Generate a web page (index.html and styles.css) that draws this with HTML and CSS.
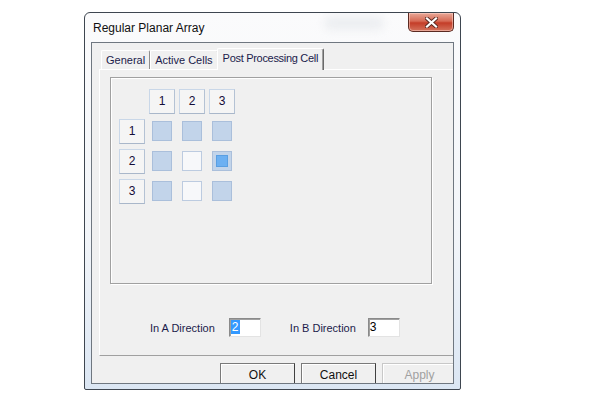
FILE: index.html
```html
<!DOCTYPE html>
<html lang="en">
<head>
    <meta charset="UTF-8">
    <title>Regular Planar Array</title>
    <link rel="stylesheet" href="styles.css">
</head>
<body>
    <div class="window">
        <div class="titlebar">
            <span class="title">Regular Planar Array</span>
            <span class="blur-spot"></span>
            <button class="close-btn" aria-label="Close">
                <svg width="13" height="11" viewBox="0 0 13 11">
                    <path d="M2 1.5 L11 9.5 M11 1.5 L2 9.5" stroke="#5a2a22" stroke-width="4" stroke-linecap="square"/>
                    <path d="M2 1.5 L11 9.5 M11 1.5 L2 9.5" stroke="#ffffff" stroke-width="2.2" stroke-linecap="square"/>
                </svg>
            </button>
        </div>
        <div class="client">
            <div class="tabs">
                <div class="tab">General</div>
                <div class="tab">Active Cells</div>
                <div class="tab tab-active">Post Processing Cell</div>
            </div>
            <div class="panel">
                <div class="groupbox">
                    <div class="cell-grid">
                        <span></span>
                        <div class="hdr">1</div>
                        <div class="hdr">2</div>
                        <div class="hdr">3</div>

                        <div class="hdr">1</div>
                        <div class="cell on"></div>
                        <div class="cell on"></div>
                        <div class="cell on"></div>

                        <div class="hdr">2</div>
                        <div class="cell on"></div>
                        <div class="cell"></div>
                        <div class="cell on picked"><span class="dot"></span></div>

                        <div class="hdr">3</div>
                        <div class="cell on"></div>
                        <div class="cell"></div>
                        <div class="cell on"></div>
                    </div>
                </div>
                <div class="fields">
                    <label class="field">In A Direction <span class="input"><span class="sel">2</span></span></label>
                    <label class="field">In B Direction <span class="input">3</span></label>
                </div>
            </div>
            <div class="buttons">
                <button class="btn">OK</button>
                <button class="btn">Cancel</button>
                <button class="btn btn-disabled">Apply</button>
            </div>
        </div>
    </div>
</body>
</html>
```

FILE: styles.css
```css
body {
    margin: 0;
    background: #ffffff;
    font-family: "Liberation Sans", Arial, sans-serif;
    font-size: 11px;
    color: #1b1b4b;
}
.window {
    margin: 12px 0 0 84px;
    width: 375px;
    height: 376px;
    border: 1px solid #3e4650;
    border-radius: 6px 6px 2px 2px;
    background: linear-gradient(#fbfbfc, #f2f5f9 60%, #dbe6f3);
    display: flex;
    flex-direction: column;
    overflow: hidden;
}
.titlebar {
    height: 29px;
    display: flex;
    align-items: flex-start;
}
.title {
    padding: 8px 0 0 8px;
    font-size: 12px;
    color: #101010;
}
.blur-spot {
    margin: 3px 0 0 120px;
    width: 60px;
    height: 14px;
    border-radius: 8px;
    background: #eceef1;
    filter: blur(4px);
}
.close-btn {
    margin-left: auto;
    margin-right: 6px;
    width: 46px;
    height: 19px;
    padding: 0;
    border: 1px solid #5b2a22;
    border-top: none;
    border-radius: 0 0 5px 5px;
    background: linear-gradient(#e9a898, #d66a55 45%, #c43d28 55%, #d4735d);
    display: flex;
    align-items: center;
    justify-content: center;
    box-shadow: inset 0 0 0 1px rgba(255, 220, 210, 0.5);
}
.client {
    margin: 0 6px;
    height: 340px;
    border: 1px solid #6f7780;
    background: #f0f0f0;
    overflow: hidden;
}
.tabs {
    display: flex;
    align-items: flex-end;
    height: 22px;
    padding: 4px 0 0 9px;
    position: relative;
    z-index: 1;
}
.tab {
    height: 18px;
    line-height: 18px;
    padding: 0 4px;
    border-top: 1px solid #ffffff;
    border-left: 1px solid #ffffff;
    border-right: 1px solid #8e8e8e;
    border-radius: 2px 2px 0 0;
    white-space: nowrap;
}
.tab-active {
    height: 21px;
    line-height: 19px;
    margin: 0 -1px -1px -1px;
    padding: 0 5px;
    letter-spacing: -0.3px;
    background: #f0f0f0;
    border-right-color: #6a6a6a;
    box-shadow: inset -1px 0 0 #a0a0a0;
}
.panel {
    margin-left: 7px;
    width: 358px;
    height: 285px;
    border-top: 1px solid #ffffff;
    border-left: 1px solid #ffffff;
    border-bottom: 1px solid #a0a0a0;
}
.groupbox {
    margin: 7px 0 0 10px;
    width: 304px;
    height: 189px;
    padding: 8px;
    border: 1px solid #a0a0a0;
    box-shadow: 1px 1px 0 #ffffff, inset 1px 1px 0 #ffffff;
}
.cell-grid {
    display: grid;
    grid-template-columns: 28px repeat(3, 30px);
    grid-template-rows: repeat(4, 30px);
    align-items: center;
    justify-items: start;
}
.cell-grid > :nth-child(4n+2),
.cell-grid > :nth-child(4n+3),
.cell-grid > :nth-child(4n+4) {
    justify-self: center;
}
.hdr {
    width: 24px;
    height: 23px;
    line-height: 23px;
    text-align: center;
    font-size: 12px;
    background: #f5f5f5;
    border: 1px solid #c9d7e8;
    border-bottom-color: #a9b7ca;
    border-right-color: #b4c2d4;
    color: #140c38;
}
.cell {
    width: 18px;
    height: 18px;
    background: #f7f8fa;
    border: 1px solid #bccbe0;
    display: flex;
    align-items: center;
    justify-content: center;
}
.cell.on {
    background: #c2d4ea;
    border-color: #aabfdb;
}
.dot {
    width: 10px;
    height: 10px;
    background: #6cb0f2;
    border: 1px solid #5a9fe2;
}
.fields {
    display: flex;
    margin: 34px 0 0 50px;
}
.field {
    display: flex;
    align-items: center;
    gap: 14px;
}
.field + .field {
    margin-left: 29px;
    gap: 12px;
}
.input {
    width: 28px;
    height: 15px;
    line-height: 15px;
    padding: 1px;
    font-size: 12px;
    background: #ffffff;
    color: #000000;
    border: 1px solid #8a8a8a;
    border-right-color: #e3e3e3;
    border-bottom-color: #e3e3e3;
    box-shadow: inset 1px 1px 0 #a0a0a0;
}
.sel {
    background: #3399ff;
    color: #ffffff;
    padding: 0 1px;
}
.buttons {
    display: flex;
    gap: 6px;
    margin-top: 7px;
    padding-left: 128px;
}
.btn {
    flex: none;
    width: 75px;
    height: 23px;
    padding: 0;
    font-family: "Liberation Sans", Arial, sans-serif;
    font-size: 12px;
    color: #101010;
    background: #f0f0f0;
    border: 1px solid #7a7a7a;
    border-right-color: #404040;
    box-shadow: inset 1px 1px 0 #ffffff;
}
.btn-disabled {
    color: #a0a0a0;
    border-color: #c8c8c8;
}
```
